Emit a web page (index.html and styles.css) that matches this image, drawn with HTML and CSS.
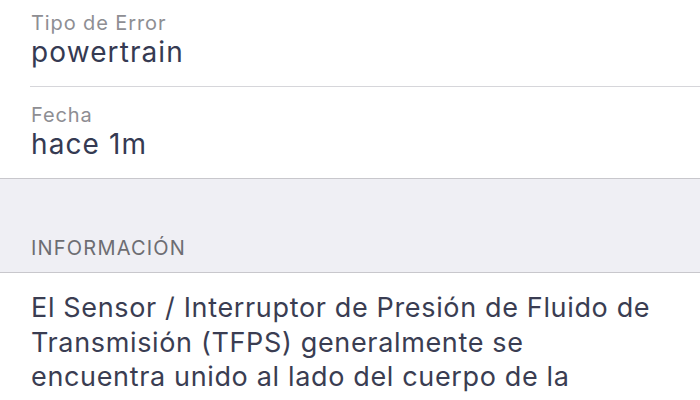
FILE: index.html
```html
<!DOCTYPE html>
<html lang="es">
<head>
<meta charset="utf-8">
<link rel="stylesheet" href="styles.css">
</head>
<body>
<div class="screen">
  <div class="group">
    <div class="row first">
      <div class="label">Tipo de Error</div>
      <div class="value">powertrain</div>
    </div>
    <div class="row last">
      <div class="label">Fecha</div>
      <div class="value">hace 1m</div>
    </div>
  </div>
  <div class="section-header">INFORMACIÓN</div>
  <div class="body-text">El Sensor / Interruptor de Presión de Fluido de Transmisión (TFPS) generalmente se encuentra unido al lado del cuerpo de la válvula de la transmisión.</div>
</div>
</body>
</html>
```
FILE: styles.css
```css
html, body {
  margin: 0;
  padding: 0;
  background: #ffffff;
}
body {
  width: 700px;
  height: 400px;
  overflow: hidden;
  font-family: Inter, "Noto Sans", sans-serif;
}
.screen {
  display: flex;
  flex-direction: column;
  margin-top: -5px;
}
.group {
  background: #ffffff;
  padding-left: 30px;
}
.row {
  padding: 16px 0 17px 1px;
  border-bottom: 1px solid #d6d6da;
}
.row.last {
  margin-left: -30px;
  padding-left: 31px;
  border-bottom-color: #c8c7cc;
}
.label {
  font-size: 20px;
  line-height: 24px;
  letter-spacing: 0.9px;
  color: #8e8e93;
}
.value {
  font-size: 28px;
  line-height: 34px;
  letter-spacing: 1.1px;
  color: #353a52;
}
.section-header {
  background: #efeff4;
  padding: 58px 31px 12px;
  font-size: 20px;
  line-height: 23px;
  letter-spacing: 1.2px;
  color: #6d6d72;
  border-bottom: 1px solid #c8c7cc;
}
.body-text {
  padding: 18px 42px 0 31px;
  font-size: 27px;
  line-height: 34.5px;
  letter-spacing: 0.65px;
  color: #3a3d52;
}
```
